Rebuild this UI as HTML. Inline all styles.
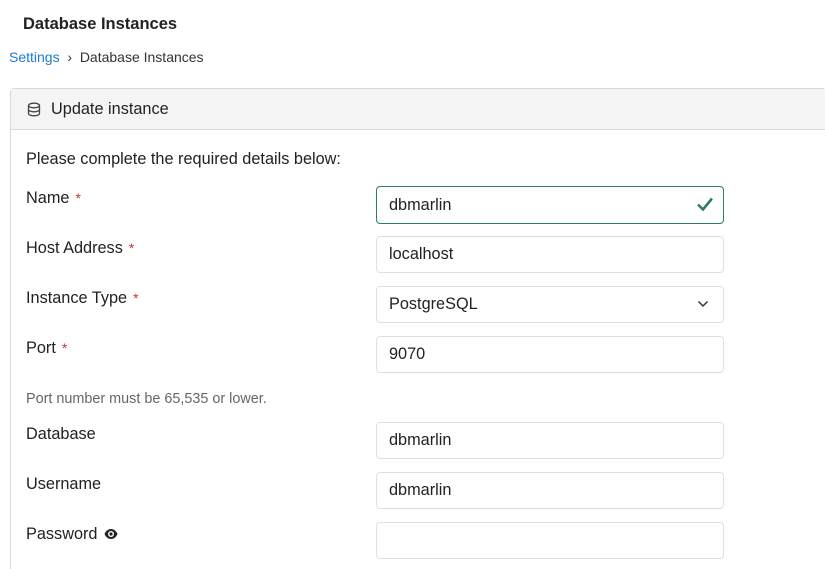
<!DOCTYPE html>
<html style="height:569px;overflow:hidden"><head><style>
body{margin:0;width:825px;height:569px;overflow:hidden;background:#fff;font-family:"Liberation Sans",Arial,sans-serif;color:#222;position:relative}
.abs{position:absolute}
.h1{left:23px;top:15px;font-size:16.5px;font-weight:bold;color:#222}
.bc{left:9px;top:49px;font-size:14px;color:#333}
.bc a{color:#1a7bd6;text-decoration:none}
.card{left:10px;top:88px;width:814px;height:481px;border:1px solid #d9d9d9;border-bottom:none;border-right:none;border-radius:4px 0 0 0;background:#fff;box-sizing:border-box}
.hdr{left:11px;top:89px;width:814px;height:40px;background:#f5f5f5;border-bottom:1px solid #d9d9d9}
.lbl{font-size:16.3px;color:#222;left:26px}
.req{color:#c33;margin-left:6px;font-size:14px}
.in{left:376px;width:348px;height:37px;border:1px solid #e0e0e0;border-radius:4px;background:#fff;font-size:16.3px;line-height:35px;padding-left:12px;box-sizing:border-box;color:#222}
</style></head><body>
<div class="abs h1">Database Instances</div>
<div class="abs bc"><a>Settings</a>&nbsp;&nbsp;›&nbsp;&nbsp;Database Instances</div>
<div class="abs card"></div>
<div class="abs hdr"></div>
<svg class="abs" style="left:27px;top:102px" width="14" height="15" viewBox="0 0 14 15" fill="none" stroke="#444" stroke-width="1.3"><ellipse cx="7" cy="3.5" rx="5.5" ry="2.3"/><path d="M1.5 3.5v8c0 1.3 2.5 2.3 5.5 2.3s5.5-1 5.5-2.3v-8M1.5 7.5c0 1.3 2.5 2.3 5.5 2.3s5.5-1 5.5-2.3"/></svg>
<div class="abs" style="left:51px;top:100px;font-size:16.3px">Update instance</div>
<div class="abs lbl" style="top:150px">Please complete the required details below:</div>
<div class="abs lbl" style="top:189px">Name<span class="req">*</span></div>
<div class="abs lbl" style="top:239px">Host Address<span class="req">*</span></div>
<div class="abs lbl" style="top:289px">Instance Type<span class="req">*</span></div>
<div class="abs lbl" style="top:339px">Port<span class="req">*</span></div>
<div class="abs" style="left:26px;top:391px;font-size:14.4px;color:#666">Port number must be 65,535 or lower.</div>
<div class="abs lbl" style="top:425px">Database</div>
<div class="abs lbl" style="top:475px">Username</div>
<div class="abs lbl" style="top:525px">Password</div>
<svg class="abs" style="left:104px;top:528px" width="14" height="12" viewBox="0 0 14 12"><path d="M0.5 6C2 2.5 4.5 1 7 1s5 1.5 6.5 5C12 9.5 9.5 11 7 11S2 9.5 0.5 6z" fill="#222"/><circle cx="7" cy="6" r="3" fill="#fff"/><circle cx="7" cy="6" r="1.6" fill="#222"/></svg>
<div class="abs in" style="top:186px;height:38px;border-color:#2e7d5b;line-height:36px">dbmarlin</div>
<svg class="abs" style="left:696px;top:196px" width="18" height="16" viewBox="0 0 18 16"><path d="M2 8.5l5 5L16 2.5" stroke="#2e7d5b" stroke-width="2.6" fill="none"/></svg>
<div class="abs in" style="top:236px">localhost</div>
<div class="abs in" style="top:286px">PostgreSQL</div>
<svg class="abs" style="left:697px;top:300px" width="12" height="8" viewBox="0 0 12 8"><path d="M1.5 1.5l4.5 4.5 4.5-4.5" stroke="#333" stroke-width="1.5" fill="none"/></svg>
<div class="abs in" style="top:336px">9070</div>
<div class="abs in" style="top:422px">dbmarlin</div>
<div class="abs in" style="top:472px">dbmarlin</div>
<div class="abs in" style="top:522px"></div>
</body></html>
